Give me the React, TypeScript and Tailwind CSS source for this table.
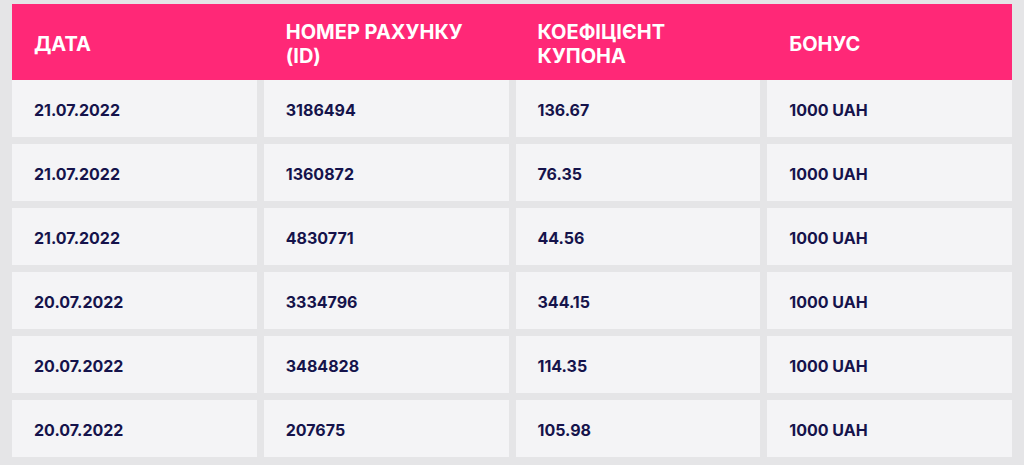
const headers = ['ДАТА', 'НОМЕР РАХУНКУ (ID)', 'КОЕФІЦІЄНТ КУПОНА', 'БОНУС'];

const rows = [
  ['21.07.2022', '3186494', '136.67', '1000 UAH'],
  ['21.07.2022', '1360872', '76.35', '1000 UAH'],
  ['21.07.2022', '4830771', '44.56', '1000 UAH'],
  ['20.07.2022', '3334796', '344.15', '1000 UAH'],
  ['20.07.2022', '3484828', '114.35', '1000 UAH'],
  ['20.07.2022', '207675', '105.98', '1000 UAH'],
];

export default function App() {
  return (
    <div className="min-h-[465px] w-[1024px] bg-[#e5e5e7] px-[12px] pt-[4px] font-['Inter',sans-serif]">
      <div className="grid h-[76px] grid-cols-4 gap-x-[7px] bg-[#ff2877]">
        {headers.map((h) => (
          <div key={h} className="flex items-center pl-[22px] pt-[4px]">
            <span className="max-w-[190px] text-[20px] font-bold leading-[24px] text-white">{h}</span>
          </div>
        ))}
      </div>
      <div className="grid grid-cols-4 gap-[7px]">
        {rows.map((r, i) =>
          r.map((c, j) => (
            <div
              key={`${i}-${j}`}
              className="flex h-[57px] items-center bg-[#f4f4f6] pl-[22px] pt-[3px] text-[16px] font-bold text-[#15134b]"
            >
              {c}
            </div>
          ))
        )}
      </div>
    </div>
  );
}
